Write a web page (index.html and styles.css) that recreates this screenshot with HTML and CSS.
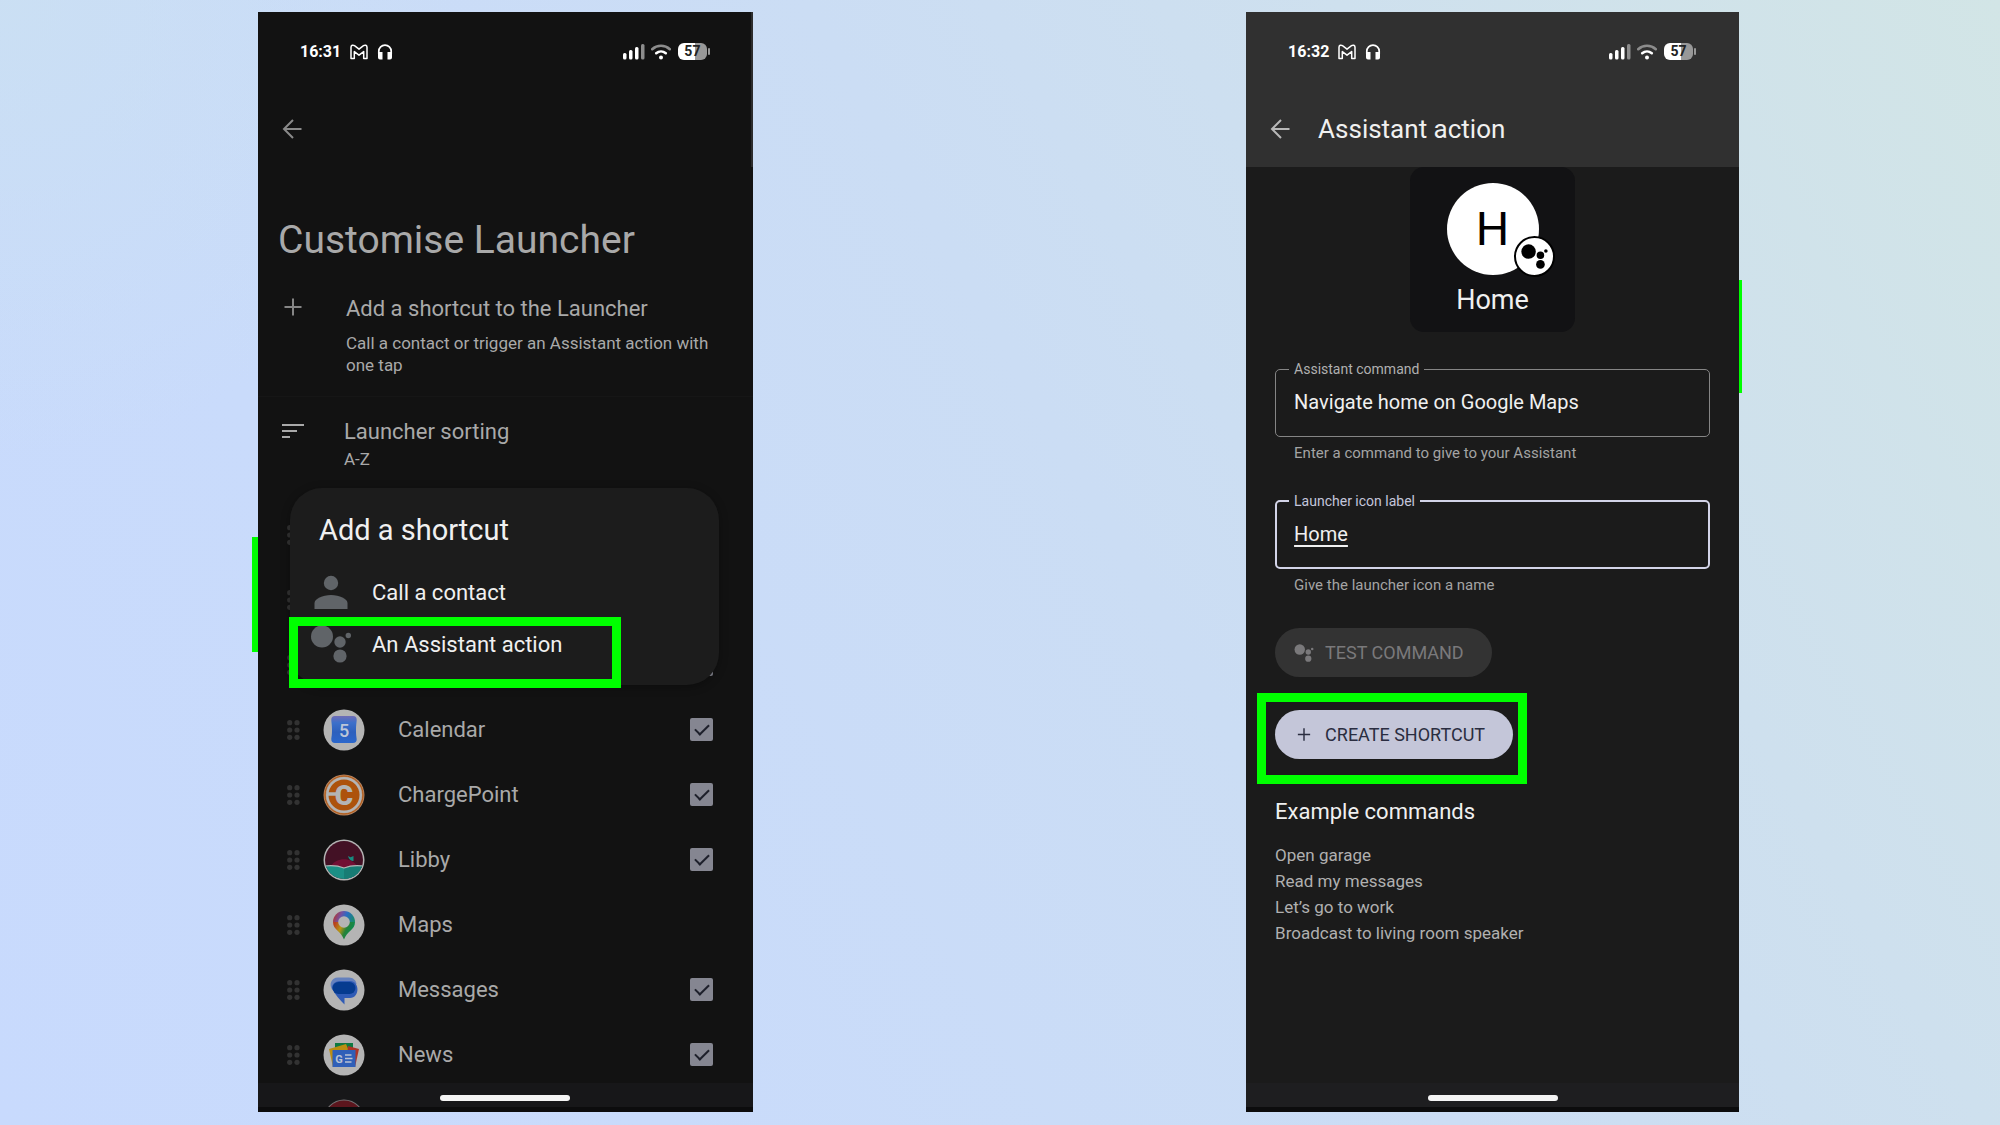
FILE: index.html
```
<!DOCTYPE html>
<html lang="en-GB">
<head>
  <meta charset="UTF-8">
  <meta name="viewport" content="width=device-width, initial-scale=1.0">
  <title>Customise Launcher</title>
  <link rel="stylesheet" href="styles.css">
</head>
<body>
  <!-- shared icons -->
  <svg class="sprite" aria-hidden="true">
    <symbol id="gmail" viewBox="0 0 18 16">
      <path d="M1 14.500V3.200C1 1.200 3 .6 4.500 1.700L9 5.200l4.500-3.500c1.500-1.100 3.500-.5 3.500 1.500v11.300h-3.300V7.600L9 11.200 4.300 7.600v6.900z" fill="none" stroke="#fff" stroke-width="1.500" stroke-linejoin="round"/>
    </symbol>
    <symbol id="headphones" viewBox="0 0 16 16">
      <path d="M1.800 10V7.300a6.200 6.200 0 0 1 12.400 0V10" fill="none" stroke="#fff" stroke-width="1.700"/>
      <path d="M1 8h4.500v7.500H3A2 2 0 0 1 1 13.500zM10.500 8H15v5.500a2 2 0 0 1-2 2h-2.500z" fill="#fff"/>
    </symbol>
    <symbol id="signal" viewBox="0 0 22 17">
      <rect x="0" y="10" width="3.500" height="6.500" rx="1.500" fill="#fff"/>
      <rect x="6" y="7" width="3.500" height="9.500" rx="1.500" fill="#fff"/>
      <rect x="12" y="4" width="3.500" height="12.500" rx="1.500" fill="#fff"/>
      <rect x="18" y="1" width="3.500" height="15.500" rx="1.500" fill="#8c8c8c"/>
    </symbol>
    <symbol id="wifi" viewBox="0 0 20 16">
      <path d="M1.200 5.200a13 13 0 0 1 17.600 0" fill="none" stroke="#8c8c8c" stroke-width="2.600" stroke-linecap="round"/>
      <path d="M5.200 9.200a7.500 7.500 0 0 1 9.600 0" fill="none" stroke="#fff" stroke-width="2.600" stroke-linecap="round"/>
      <circle cx="10" cy="13.500" r="2" fill="#fff"/>
    </symbol>
    <symbol id="back" viewBox="0 0 20 20">
      <path d="M19.500 10H2M11 1L2 10l9 9" fill="none" stroke="currentColor" stroke-width="2"/>
    </symbol>
    <symbol id="plus" viewBox="0 0 18 18">
      <path d="M9 .5v17M.5 9h17" fill="none" stroke="currentColor" stroke-width="2"/>
    </symbol>
    <symbol id="assistant" viewBox="0 0 40 38">
      <circle cx="11" cy="11.500" r="11"/>
      <circle cx="29" cy="17" r="5.700"/>
      <circle cx="37.300" cy="10.500" r="2.700"/>
      <circle cx="29" cy="31" r="6.600"/>
    </symbol>
    <symbol id="grip" viewBox="0 0 13 20">
      <circle cx="2.700" cy="2.700" r="2.600"/><circle cx="10" cy="2.700" r="2.600"/>
      <circle cx="2.700" cy="10" r="2.600"/><circle cx="10" cy="10" r="2.600"/>
      <circle cx="2.700" cy="17.300" r="2.600"/><circle cx="10" cy="17.300" r="2.600"/>
    </symbol>
  </svg>

  <main class="stage">
    <section class="phone phone-launcher">
      <div class="status">
        <span class="time">16:31</span>
        <svg class="gmail"><use href="#gmail"/></svg>
        <svg class="headphones"><use href="#headphones"/></svg>
        <svg class="signal"><use href="#signal"/></svg>
        <svg class="wifi"><use href="#wifi"/></svg>
        <span class="battery">57</span>
      </div>
      <div class="toolbar">
        <button class="back-btn" aria-label="Back"><svg><use href="#back"/></svg></button>
      </div>
      <h1 class="page-title">Customise Launcher</h1>

      <div class="setting">
        <svg class="setting-icon" viewBox="0 0 22 28"><path d="M11 3.500v17M2.500 12h17" fill="none" stroke="#858585" stroke-width="2"/></svg>
        <div class="setting-text">
          <h2>Add a shortcut to the Launcher</h2>
          <p>Call a contact or trigger an Assistant action with one tap</p>
        </div>
      </div>
      <div class="setting sorting">
        <svg class="setting-icon" viewBox="0 0 22 28"><path d="M0 7h22M0 13h15M0 19h8" fill="none" stroke="#a9a9a9" stroke-width="2"/></svg>
        <div class="setting-text">
          <h2>Launcher sorting</h2>
          <p>A-Z</p>
        </div>
      </div>

      <ul class="apps">
        <li class="app"><svg class="grip"><use href="#grip"/></svg></li>
        <li class="app"><svg class="grip"><use href="#grip"/></svg></li>
        <li class="app"><svg class="grip"><use href="#grip"/></svg><input type="checkbox" aria-label="Show in launcher" checked></li>
        <li class="app">
          <svg class="grip"><use href="#grip"/></svg>
          <svg class="app-icon" viewBox="0 0 42 42">
            <defs><linearGradient id="cal" x2="0" y2="1"><stop offset="0" stop-color="#6f6cb6"/><stop offset=".25" stop-color="#3c70ca"/><stop offset=".6" stop-color="#2d60bd"/><stop offset="1" stop-color="#2b67cc"/></linearGradient></defs>
            <circle cx="21" cy="21" r="20.500" fill="#b4b4b4"/>
            <path d="M12 7h18c2.500 0 3.800 1.600 3.700 4-.2 3-.7 5-.7 10s.5 7 .7 9c.1 2.700-1.300 4-3.700 4H12c-2.500 0-3.800-1.300-3.700-4 .2-2 .7-4 .7-9s-.5-7-.7-10C8.200 8.600 9.500 7 12 7z" fill="url(#cal)"/>
            <text x="21" y="27.500" text-anchor="middle" font-size="18" font-weight="500" fill="#bcc6d8">5</text>
          </svg>
          <label for="calendar">Calendar</label>
          <input type="checkbox" id="calendar" checked>
        </li>
        <li class="app">
          <svg class="grip"><use href="#grip"/></svg>
          <svg class="app-icon" viewBox="0 0 42 42">
            <circle cx="21" cy="21" r="20.500" fill="#b5835f"/>
            <circle cx="21" cy="21" r="19" fill="none" stroke="#b4570f" stroke-width="1"/>
            <circle cx="21" cy="21" r="18" fill="#b4b4b4"/>
            <circle cx="21" cy="21" r="15.500" fill="#ad520c"/>
            <path d="M5 20h11" stroke="#b4b4b4" stroke-width="3.500"/>
            <text x="21" y="31" text-anchor="middle" font-size="28" font-weight="900" fill="#b4b4b4">C</text>
          </svg>
          <label for="chargepoint">ChargePoint</label>
          <input type="checkbox" id="chargepoint" checked>
        </li>
        <li class="app">
          <svg class="grip"><use href="#grip"/></svg>
          <svg class="app-icon" viewBox="0 0 42 42">
            <defs><clipPath id="libby"><circle cx="21" cy="21" r="19"/></clipPath></defs>
            <circle cx="21" cy="21" r="20.500" fill="#b4b4b4"/>
            <g clip-path="url(#libby)">
              <path d="M0 0h42v42H0z" fill="#431125"/>
              <path d="M8 27c5-9 21-9 26 0l-13 4z" fill="#720f34"/>
              <path d="M25 17l2.500 1.300L30.500 17v5c-2 0-4.500-1-5.500-5z" fill="#188b80"/>
              <path d="M0 27c8-1 15-1 21 2 6-3 13-3 21-2v15H0z" fill="#1b8f85"/>
              <path d="M21 29c5-2 10-3 21-2v15H21z" fill="#177c74"/>
              <path d="M2 27c8-1 14 0 19 2 5-2 11-3 19-2" fill="none" stroke="#b4b4b4" stroke-width="1.200"/>
            </g>
          </svg>
          <label for="libby-app">Libby</label>
          <input type="checkbox" id="libby-app" checked>
        </li>
        <li class="app">
          <svg class="grip"><use href="#grip"/></svg>
          <svg class="app-icon" viewBox="0 0 42 42">
            <defs>
              <linearGradient id="pin" x1="0" y1=".3" x2="1" y2=".5"><stop offset="0" stop-color="#b8301f"/><stop offset=".35" stop-color="#7450a0"/><stop offset=".6" stop-color="#2b6bc4"/><stop offset="1" stop-color="#1a8a70"/></linearGradient>
              <linearGradient id="pin2" x1="0" y1=".3" x2=".8" y2=".6"><stop offset="0" stop-color="#b8401f"/><stop offset=".4" stop-color="#b79414"/><stop offset=".7" stop-color="#26813a"/><stop offset="1" stop-color="#108a4c"/></linearGradient>
            </defs>
            <circle cx="21" cy="21" r="20.500" fill="#b4b4b4"/>
            <path d="M21 7a11 11 0 0 1 11 11H10A11 11 0 0 1 21 7z" fill="url(#pin)"/>
            <path d="M10 18h22c0 8-8 9-11 17.500C18 27 10 26 10 18z" fill="url(#pin2)"/>
            <circle cx="21" cy="18" r="5.800" fill="#b4b4b4"/>
          </svg>
          <span class="app-name">Maps</span>
        </li>
        <li class="app">
          <svg class="grip"><use href="#grip"/></svg>
          <svg class="app-icon" viewBox="0 0 42 42">
            <circle cx="21" cy="21" r="20.500" fill="#b4b4b4"/>
            <path d="M15 8.500h11c4 0 7 3 7.500 6l-6 13H21L9.500 21C5.500 16 8 8.500 15 8.500z" fill="#6480bd"/>
            <path d="M17 12h10c10 0 10 17 0 17h-5.500v6.500C17 31 12 26 9.500 20 8 16 12 12 17 12z" fill="#2f5bb5"/>
            <rect x="9.500" y="13" width="23" height="12" rx="6" fill="#053b8f"/>
          </svg>
          <label for="messages">Messages</label>
          <input type="checkbox" id="messages" checked>
        </li>
        <li class="app">
          <svg class="grip"><use href="#grip"/></svg>
          <svg class="app-icon" viewBox="0 0 42 42">
            <circle cx="21" cy="21" r="20.500" fill="#b4b4b4"/>
            <path d="M12 9h18v10H12z" fill="#0e7a42"/>
            <path d="M6 15l17-5 4 9-14 14h-3z" fill="#bb8e12"/>
            <path d="M25 12l11 3-4 18h-9z" fill="#ae3427"/>
            <path d="M9.500 16h23v17h-23z" fill="#2f5fb8"/>
            <text x="16" y="28.500" text-anchor="middle" font-size="11" font-weight="700" fill="#b9c2d4">G</text>
            <path d="M22 21h6.500M22 24.500h7.500M22 28h6.500" stroke="#b9c2d4" stroke-width="1.600"/>
          </svg>
          <label for="news">News</label>
          <input type="checkbox" id="news" checked>
        </li>
        <li class="app">
          <svg class="grip"></svg>
          <svg class="app-icon" viewBox="0 0 42 42">
            <circle cx="21" cy="21" r="20.500" fill="#8c8c8c"/>
            <circle cx="21" cy="21" r="19.500" fill="#6e0f17"/>
          </svg>
        </li>
      </ul>

      <div class="dialog" role="dialog" aria-labelledby="dialog-title">
        <h2 id="dialog-title">Add a shortcut</h2>
        <button class="dialog-item">
          <svg viewBox="0 0 40 38"><circle cx="20" cy="10" r="7.200"/><path d="M3.500 36v-6c0-4 8-8 16.500-8s16.500 4 16.500 8v6z"/></svg>
          Call a contact
        </button>
        <button class="dialog-item highlight">
          <svg><use href="#assistant"/></svg>
          An Assistant action
        </button>
      </div>
      <div class="nav"></div>
    </section>

    <section class="phone phone-action">
      <header class="action-header">
        <div class="status">
          <span class="time">16:32</span>
          <svg class="gmail"><use href="#gmail"/></svg>
          <svg class="headphones"><use href="#headphones"/></svg>
          <svg class="signal"><use href="#signal"/></svg>
          <svg class="wifi"><use href="#wifi"/></svg>
          <span class="battery">57</span>
        </div>
        <div class="toolbar">
          <button class="back-btn" aria-label="Back"><svg><use href="#back"/></svg></button>
          <h1>Assistant action</h1>
        </div>
      </header>

      <div class="preview">
        <div class="preview-icon">
          H
          <span class="badge"><svg><use href="#assistant"/></svg></span>
        </div>
        <span class="preview-name">Home</span>
      </div>

      <form class="action-form">
        <fieldset class="field">
          <legend><label for="command">Assistant command</label></legend>
          <input type="text" id="command" value="Navigate home on Google Maps">
        </fieldset>
        <p class="helper">Enter a command to give to your Assistant</p>
        <fieldset class="field active">
          <legend><label for="icon-label">Launcher icon label</label></legend>
          <input type="text" id="icon-label" value="Home">
        </fieldset>
        <p class="helper">Give the launcher icon a name</p>
        <button type="button" class="pill test-btn"><svg><use href="#assistant"/></svg>TEST COMMAND</button>
        <button type="button" class="pill create-btn highlight"><svg><use href="#plus"/></svg>CREATE SHORTCUT</button>
      </form>

      <div class="examples">
        <h2>Example commands</h2>
        <ul>
          <li>Open garage</li>
          <li>Read my messages</li>
          <li>Let’s go to work</li>
          <li>Broadcast to living room speaker</li>
        </ul>
      </div>
      <div class="nav"></div>
    </section>
  </main>
</body>
</html>
```
FILE: styles.css
```
*, *::before, *::after { box-sizing: border-box; }
body {
  margin: 0;
  font-family: Roboto, "Liberation Sans", sans-serif;
  background:
    radial-gradient(circle at 0 0, rgba(203, 225, 240, 0.7), rgba(203, 225, 240, 0) 20%),
    linear-gradient(60deg, #c8dafd 0%, #c9dbfb 25%, #cbddf4 55%, #cee0ee 75%, #d2e5e6 100%);
}
h1, h2, p, ul {
  margin: 0;
  padding: 0;
  font-weight: 400;
}
ul { list-style: none; }
button {
  font: inherit;
  border: none;
  padding: 0;
  cursor: pointer;
}
.sprite {
  position: absolute;
  width: 0;
  height: 0;
}

.stage {
  display: grid;
  grid-template-columns: 495fr 493fr;
  column-gap: 33.3%;
  height: 100vh;
  min-height: 800px;
  padding: 12px 13.05% 13px 12.9%;
}
.phone {
  position: relative;
  display: flex;
  flex-direction: column;
  min-width: 0;
  min-height: 0;
  border-bottom: 5px solid #0c0c0d;
}
.phone-launcher {
  background: #121212;
  color: #a9a9a9;
}
.phone-action {
  background: #1b1b1b;
  color: #f0f0f0;
}

/* slivers of green sticking out at the phone edges */
.phone-launcher::before,
.phone-action::before {
  content: "";
  position: absolute;
  background: #00ff00;
}
.phone-launcher::before {
  right: 100%;
  top: 525px;
  width: 6px;
  height: 115px;
}
.phone-action::before {
  left: 100%;
  top: 268px;
  width: 3px;
  height: 113px;
}
.phone-launcher::after {
  content: "";
  position: absolute;
  top: 0;
  right: 0;
  width: 2px;
  height: 155px;
  background: #2c2c2d;
}

/* status bar */
.status {
  display: flex;
  flex: none;
  align-items: center;
  height: 79px;
  padding: 0 46px 0 42px;
  color: #fff;
}
.time {
  font-size: 16px;
  font-weight: 700;
}
.gmail { width: 18px; height: 16px; margin-left: 9px; }
.headphones { width: 16px; height: 16px; margin-left: 9px; }
.signal { width: 22px; height: 17px; margin-left: auto; }
.wifi { width: 20px; height: 16px; margin-left: 6px; }
.battery {
  position: relative;
  width: 29px;
  height: 17px;
  margin-left: 7px;
  border-radius: 6px;
  background: linear-gradient(90deg, #fff 58%, #989898 58%);
  color: #222;
  font-size: 14px;
  font-weight: 700;
  line-height: 17px;
  text-align: center;
}
.battery::after {
  content: "";
  position: absolute;
  left: 30px;
  top: 5px;
  width: 2px;
  height: 7px;
  border-radius: 1px;
  background: #989898;
}

.toolbar {
  display: flex;
  flex: none;
  align-items: center;
  gap: 28px;
  height: 76px;
  padding: 0 24px;
}
.toolbar h1 {
  font-size: 26px;
  line-height: 32px;
}
.back-btn {
  width: 20px;
  height: 20px;
  background: none;
  color: #8a8a8a;
}
.back-btn svg {
  display: block;
  width: 20px;
  height: 20px;
}

/* customise launcher */
.page-title {
  margin: 49px 20px 31px;
  font-size: 39px;
  line-height: 48px;
}
.setting {
  display: flex;
  flex: none;
  gap: 42px;
  padding: 0 40px 20px 24px;
  border-bottom: 1px solid #161616;
}
.setting-icon {
  flex: none;
  width: 22px;
  height: 28px;
}
.setting h2 {
  font-size: 22px;
  line-height: 28px;
}
.setting p {
  margin-top: 9px;
  font-size: 17px;
  line-height: 22px;
}
.sorting {
  gap: 40px;
  padding-top: 21px;
  padding-bottom: 32px;
  border: none;
}
.sorting p { margin-top: 2px; }

.apps {
  flex: 1;
  min-height: 0;
  overflow: hidden;
}
.app {
  display: flex;
  align-items: center;
  height: 65px;
  padding: 0 40px 0 29px;
  font-size: 22px;
}
.grip {
  width: 13px;
  height: 20px;
  margin-right: 23px;
  fill: #323232;
}
.app-icon {
  width: 42px;
  height: 42px;
  margin-right: 33px;
}
.app input {
  appearance: none;
  position: relative;
  width: 23px;
  height: 23px;
  margin: 0 0 0 auto;
  border-radius: 2px;
  background: #858691;
}
.app input::after {
  content: "";
  position: absolute;
  left: 8px;
  top: 3px;
  width: 8px;
  height: 14px;
  border: solid #1e202b;
  border-width: 0 2px 2px 0;
  transform: rotate(45deg);
}

/* dialog */
.dialog {
  position: absolute;
  top: 476px;
  left: 32px;
  right: 34px;
  padding: 24px 21px 11px;
  border-radius: 32px;
  background: #1c1c1c;
  box-shadow: 0 2px 10px rgba(0, 0, 0, 0.3);
  color: #f0f0f0;
}
.dialog h2 {
  margin: 0 8px 22px;
  font-size: 29px;
  line-height: 36px;
}
.dialog-item {
  display: flex;
  align-items: center;
  gap: 21px;
  width: 100%;
  height: 44px;
  margin-bottom: 8px;
  background: none;
  color: #f0f0f0;
  font-size: 22px;
  text-align: left;
}
.dialog-item svg {
  width: 40px;
  height: 38px;
  fill: #606468;
}

/* green marker box round a control */
.highlight { position: relative; }
.highlight::after {
  content: "";
  position: absolute;
  border: 9px solid #00ff00;
}
.dialog-item.highlight::after {
  top: -5px;
  left: -22px;
  width: 332px;
  height: 71px;
}
.create-btn.highlight::after {
  top: -17px;
  left: -18px;
  right: -14px;
  bottom: -25px;
}

/* assistant action */
.action-header {
  flex: none;
  background: #303030;
}
.action-header .back-btn { color: #b8b8b8; }
.preview {
  display: flex;
  flex: none;
  flex-direction: column;
  align-items: center;
  align-self: center;
  width: 165px;
  height: 165px;
  padding-top: 16px;
  border-radius: 14px;
  background: #121214;
}
.preview-icon {
  position: relative;
  width: 92px;
  height: 92px;
  border-radius: 50%;
  background: #fff;
  color: #000;
  font-size: 47px;
  line-height: 92px;
  text-align: center;
}
.badge {
  position: absolute;
  right: -16px;
  bottom: -2px;
  display: flex;
  align-items: center;
  justify-content: center;
  width: 41px;
  height: 41px;
  border: 2px solid #000;
  border-radius: 50%;
  background: #fff;
}
.badge svg {
  width: 27px;
  height: 25px;
}
.preview-name {
  margin-top: 8px;
  font-size: 27px;
  line-height: 34px;
}

.action-form {
  display: flex;
  flex: none;
  flex-direction: column;
  align-items: flex-start;
  margin: 28px 29px 0;
}
.field {
  width: 100%;
  height: 77px;
  margin: 0;
  padding: 0 13px;
  border: 1px solid #858585;
  border-radius: 5px;
}
.field legend {
  padding: 0 5px;
  color: #b0b0b0;
  font-size: 14px;
  line-height: 18px;
}
.field input {
  display: block;
  width: 100%;
  padding: 10px 5px 0;
  border: none;
  outline: none;
  background: none;
  color: #f0f0f0;
  font: inherit;
  font-size: 20px;
  line-height: 28px;
}
.field.active {
  padding: 0 12px;
  border: 2px solid #d3d4e8;
}
.field.active legend { color: #c4c6dc; }
.field.active input {
  text-decoration: underline;
  text-underline-offset: 4px;
}
.helper {
  margin: 7px 19px 29px;
  color: #a4a4a4;
  font-size: 15px;
  line-height: 19px;
}
.pill {
  display: flex;
  align-items: center;
  gap: 11px;
  height: 49px;
  padding: 0 28px 0 19px;
  border-radius: 25px;
  font-size: 18px;
  line-height: 20px;
}
.pill svg {
  width: 20px;
  height: 18px;
}
.test-btn {
  margin-top: 4px;
  background: #333;
  color: #7a797b;
  fill: #7a797b;
}
.create-btn {
  margin-top: 33px;
  background: #c4c6d9;
  color: #2a2d40;
}
.create-btn svg {
  height: 13px;
}

.examples { margin: 37px 29px 0; }
.examples h2 {
  margin-bottom: 14px;
  font-size: 22px;
  line-height: 32px;
}
.examples li {
  color: #b0b0b0;
  font-size: 17px;
  line-height: 26px;
}

/* gesture bar */
.nav {
  position: absolute;
  left: 0;
  right: 0;
  bottom: 0;
  display: flex;
  justify-content: center;
  height: 24px;
  padding-top: 12px;
  background: rgba(40, 40, 46, 0.25);
}
.nav::before {
  content: "";
  width: 130px;
  height: 6px;
  border-radius: 3px;
  background: #f4f4f4;
}
```
